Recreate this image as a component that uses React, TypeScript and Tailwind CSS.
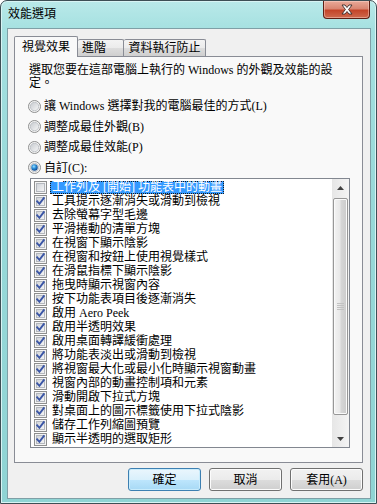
import React from 'react'

const FONT = { fontFamily: '"Liberation Serif", "Noto Sans CJK TC", serif' }

const effects: { label: string; checked: boolean }[] = [
  { label: '工作列及 [開始] 功能表中的動畫', checked: false },
  { label: '工具提示逐漸消失或滑動到檢視', checked: true },
  { label: '去除螢幕字型毛邊', checked: true },
  { label: '平滑捲動的清單方塊', checked: true },
  { label: '在視窗下顯示陰影', checked: true },
  { label: '在視窗和按鈕上使用視覺樣式', checked: true },
  { label: '在滑鼠指標下顯示陰影', checked: true },
  { label: '拖曳時顯示視窗內容', checked: true },
  { label: '按下功能表項目後逐漸消失', checked: true },
  { label: '啟用 Aero Peek', checked: true },
  { label: '啟用半透明效果', checked: true },
  { label: '啟用桌面轉譯緩衝處理', checked: true },
  { label: '將功能表淡出或滑動到檢視', checked: true },
  { label: '將視窗最大化或最小化時顯示視窗動畫', checked: true },
  { label: '視窗內部的動畫控制項和元素', checked: true },
  { label: '滑動開啟下拉式方塊', checked: true },
  { label: '對桌面上的圖示標籤使用下拉式陰影', checked: true },
  { label: '儲存工作列縮圖預覽', checked: true },
  { label: '顯示半透明的選取矩形', checked: true },
]

const radios = [
  { label: '讓 Windows 選擇對我的電腦最佳的方式(L)', selected: false },
  { label: '調整成最佳外觀(B)', selected: false },
  { label: '調整成最佳效能(P)', selected: false },
  { label: '自訂(C):', selected: true },
]

function CheckBox({ checked }: { checked: boolean }) {
  return (
    <svg width="13" height="13" viewBox="0 0 13 13" className="shrink-0">
      <defs>
        <linearGradient id="cbInner" x1="0" y1="0" x2="1" y2="1">
          <stop offset="0" stopColor="#cfd3d9" />
          <stop offset="1" stopColor="#f6f6f6" />
        </linearGradient>
      </defs>
      <rect x="0.5" y="0.5" width="12" height="12" fill="#f4f4f4" stroke="#8e8f8f" />
      <rect x="2.5" y="2.5" width="8" height="8" fill="url(#cbInner)" stroke="#b4b8be" />
      {checked && (
        <path
          d="M3.2 6.4 L5.4 8.8 L9.8 3.2"
          fill="none"
          stroke="#3b56a6"
          strokeWidth="1.9"
          strokeLinecap="square"
        />
      )}
    </svg>
  )
}

function Radio({ selected }: { selected: boolean }) {
  return (
    <svg width="13" height="13" viewBox="0 0 13 13" className="shrink-0">
      <defs>
        <linearGradient id="rdInner" x1="0" y1="0" x2="1" y2="1">
          <stop offset="0" stopColor="#c6cacf" />
          <stop offset="1" stopColor="#f7f7f7" />
        </linearGradient>
        <radialGradient id="rdDot" cx="0.4" cy="0.35" r="0.7">
          <stop offset="0" stopColor="#9fe0ff" />
          <stop offset="0.45" stopColor="#2c8fd8" />
          <stop offset="1" stopColor="#0b3f86" />
        </radialGradient>
      </defs>
      <circle cx="6.5" cy="6.5" r="6" fill="#f4f4f4" stroke="#8e8f8f" />
      <circle cx="6.5" cy="6.5" r="4.2" fill="url(#rdInner)" stroke="#b9bdc2" strokeWidth="0.8" />
      {selected && <circle cx="6.5" cy="6.5" r="3.2" fill="url(#rdDot)" />}
    </svg>
  )
}

function Button({ label, primary }: { label: string; primary?: boolean }) {
  return (
    <button
      className={
        primary
          ? 'relative h-[23px] w-[73px] rounded-[3px] border border-[#3c7fb1] bg-[linear-gradient(#eaf6fd_0%,#d9f0fc_50%,#bee6fd_50%,#a7d9f5_100%)] text-[12px] leading-none text-black shadow-[inset_0_0_0_1px_#c9ecfc]'
          : 'relative h-[23px] w-[73px] rounded-[3px] border border-[#707070] bg-[linear-gradient(#f2f2f2_0%,#ebebeb_50%,#dddddd_50%,#cfcfcf_100%)] text-[12px] leading-none text-black shadow-[inset_0_0_0_1px_#fcfcfc]'
      }
      style={FONT}
    >
      {label}
    </button>
  )
}

export default function App() {
  return (
    <div className="h-[504px] w-[377px] overflow-hidden bg-white" style={FONT}>
      <div className="relative flex h-[504px] w-[377px] flex-col rounded-t-[7px] border border-[#3d4f55] bg-[linear-gradient(180deg,#b9e9e9_0%,#a4e0e0_6%,#98d9d9_40%,#8fd4d4_100%)] shadow-[inset_0_0_0_1px_#d8f4f4]">
        {/* title bar */}
        <div className="flex h-[27px] shrink-0 items-start pl-[7px] pt-[6px]">
          <span className="text-[12px] leading-[14px] text-black">效能選項</span>
        </div>
        <div className="absolute right-[6px] top-0 flex h-[18px] w-[47px] items-center justify-center rounded-b-[4px] border border-t-0 border-[#5e1f14] bg-[linear-gradient(180deg,#e9aa99_0%,#d98672_45%,#c44529_55%,#cf6a4e_100%)] shadow-[inset_0_0_0_1px_rgba(255,220,210,0.45)]">
          <svg width="14" height="11" viewBox="0 0 14 11">
            <path
              d="M2 1 L5 1 L7 3.5 L9 1 L12 1 L8.6 5.5 L12 10 L9 10 L7 7.5 L5 10 L2 10 L5.4 5.5 Z"
              fill="#ffffff"
              stroke="#3a2a28"
              strokeWidth="0.9"
              strokeLinejoin="round"
            />
          </svg>
        </div>

        {/* client area */}
        <div className="mb-[4px] ml-[6px] mr-[5px] flex flex-1 flex-col border border-[#7f9fa6] bg-[#f0f0f0] pl-[6px] pr-[7px] pt-[7px]">
          {/* tabs */}
          <div className="relative z-10 flex h-[20px] items-end">
            <div className="mb-[-1px] flex h-[21px] w-[64px] items-center justify-center rounded-t-[2px] border border-b-0 border-[#898c95] bg-[#f9f9f9] text-[12px] leading-none text-black">
              視覺效果
            </div>
            <div className="flex h-[17px] w-[46px] items-center justify-start rounded-t-[2px] border border-b-0 border-l-0 border-[#898c95] bg-[linear-gradient(#f3f3f3_0%,#ebebeb_50%,#dddddd_50%,#cfcfcf_100%)] pl-[4px] text-[12px] leading-none text-black">
              進階
            </div>
            <div className="flex h-[17px] w-[82px] items-center justify-center rounded-t-[2px] border border-b-0 border-l-0 border-[#898c95] bg-[linear-gradient(#f3f3f3_0%,#ebebeb_50%,#dddddd_50%,#cfcfcf_100%)] text-[12px] leading-none text-black">
              資料執行防止
            </div>
          </div>

          {/* tab panel */}
          <div className="flex h-[407px] flex-col border border-[#898c95] bg-[#f9f9f9] pl-[14px] pt-[7px]">
            <p className="text-[12px] leading-[13px] text-black">
              選取您要在這部電腦上執行的 Windows 的外觀及效能的設
              <br />
              定。
            </p>

            <div className="mt-[9px] flex flex-col gap-[6.5px]">
              {radios.map((r) => (
                <div key={r.label} className="-ml-[1px] flex h-[14px] items-center gap-[3px]">
                  <Radio selected={r.selected} />
                  <span className="text-[12px] leading-none text-black">{r.label}</span>
                </div>
              ))}
            </div>

            {/* effects list */}
            <div className="ml-[1px] mt-[3.5px] flex h-[270px] w-[320px] border border-[#828790] bg-white">
              <div className="flex flex-1 flex-col pl-[3px] pt-[1px]">
                {effects.map((e, i) => (
                  <div key={e.label} className="flex h-[14px] items-center">
                    <CheckBox checked={e.checked} />
                    <span
                      className={
                        i === 0
                          ? 'ml-[3px] flex h-[13px] items-center whitespace-nowrap border border-dotted border-[#1a1a1a] bg-[#3399ff] px-[1px] text-[12px] leading-none text-white'
                          : 'ml-[3px] flex h-[13px] items-center whitespace-nowrap px-[2px] text-[12px] leading-none text-black'
                      }
                    >
                      {e.label}
                    </span>
                  </div>
                ))}
              </div>

              {/* scrollbar */}
              <div className="flex w-[17px] flex-col bg-[linear-gradient(90deg,#e6e6e6,#f4f4f4)]">
                <div className="flex h-[17px] items-center justify-center">
                  <svg width="7" height="4" viewBox="0 0 7 4">
                    <path d="M0 4 L3.5 0 L7 4 Z" fill="#404040" />
                  </svg>
                </div>
                <div className="flex flex-1 flex-col pt-[2px]">
                  <div className="mx-[1px] flex h-[217px] items-center justify-center rounded-[2px] border border-[#979797] bg-[linear-gradient(90deg,#f3f3f3_0%,#e8e8e8_45%,#d6d6d6_55%,#cbcbcb_100%)] shadow-[inset_0_0_0_1px_#fafafa]">
                    <div className="flex flex-col gap-[1px]">
                      <div className="h-[1px] w-[7px] bg-[#c2c2c2]" />
                      <div className="h-[1px] w-[7px] bg-[#c2c2c2]" />
                      <div className="h-[1px] w-[7px] bg-[#c2c2c2]" />
                      <div className="h-[1px] w-[7px] bg-[#c2c2c2]" />
                    </div>
                  </div>
                </div>
                <div className="flex h-[17px] items-center justify-center">
                  <svg width="7" height="4" viewBox="0 0 7 4">
                    <path d="M0 0 L7 0 L3.5 4 Z" fill="#404040" />
                  </svg>
                </div>
              </div>
            </div>
          </div>

          {/* buttons */}
          <div className="mt-[5px] flex justify-end gap-[8px]">
            <Button label="確定" primary />
            <Button label="取消" />
            <Button label="套用(A)" />
          </div>
        </div>
      </div>
    </div>
  )
}
